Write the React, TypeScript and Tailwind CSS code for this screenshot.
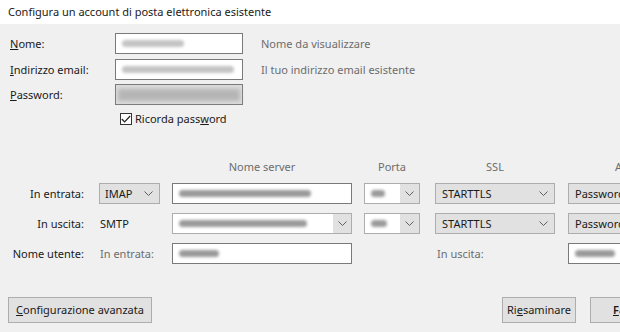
import React from 'react';

const font = "font-['Segoe_UI','Noto_Sans',sans-serif]";

const Chevron = () => (
  <svg width="9" height="5" viewBox="0 0 9 5" className="shrink-0">
    <polyline points="0.5,0.5 4.5,4.5 8.5,0.5" fill="none" stroke="#5f5f5f" strokeWidth="1" />
  </svg>
);

// blurred placeholder for the redacted values
const Smudge = ({ w, dark = false }: { w: number; dark?: boolean }) => (
  <div
    className={dark ? 'h-[7px] rounded-full bg-[#9a9a9a] blur-[1.5px]' : 'h-[7px] rounded-full bg-[#c4c4c4] blur-[1.5px]'}
    style={{ width: w }}
  />
);

const TextBox = ({ w, smudge, dark }: { w: number; smudge: number; dark?: boolean }) => (
  <div className="flex h-[21px] shrink-0 items-center border border-[#7a7a7a] bg-white pl-[6px]" style={{ width: w }}>
    <Smudge w={smudge} dark={dark} />
  </div>
);

const Select = ({ w, label, pl = 6 }: { w: number; label: string; pl?: number }) => (
  <div
    className="flex h-[21px] shrink-0 items-center justify-between whitespace-nowrap border border-[#adadad] bg-[#e1e1e1] pr-[6px] text-[#1a1a1a]"
    style={{ width: w, paddingLeft: pl }}
  >
    <span>{label}</span>
    <Chevron />
  </div>
);

const Combo = ({ w, edit, smudge }: { w: number; edit: number; smudge: number }) => (
  <div className="flex h-[21px] shrink-0 items-stretch border border-[#adadad] bg-[#e1e1e1]" style={{ width: w }}>
    <div className="flex items-center bg-white pl-[6px]" style={{ width: edit }}>
      <Smudge w={smudge} dark />
    </div>
    <div className="flex flex-1 items-center justify-center">
      <Chevron />
    </div>
  </div>
);

const Button = ({ children, w }: { children: React.ReactNode; w: number }) => (
  <div
    className="flex h-[26px] shrink-0 items-center justify-center whitespace-nowrap border border-[#adadad] bg-[#e1e1e1] text-[#1a1a1a]"
    style={{ width: w }}
  >
    {children}
  </div>
);

export default function App() {
  return (
    <div className={`${font} h-[332px] w-[620px] overflow-hidden whitespace-nowrap bg-[#f0f0f0] text-[11px] leading-[16px] text-[#1a1a1a]`}>
      <div className="flex h-[24px] items-center bg-white pl-[8px]">
        Configura un account di posta elettronica esistente
      </div>

      <div className="pl-[10px]">
        <div className="mt-[9px] flex h-[21px] items-center">
          <div className="w-[105px] shrink-0"><u>N</u>ome:</div>
          <TextBox w={128} smudge={62} />
          <div className="ml-[18px] shrink-0 text-[#6d6d6d]">Nome da visualizzare</div>
        </div>
        <div className="mt-[5px] flex h-[21px] items-center">
          <div className="w-[105px] shrink-0"><u>I</u>ndirizzo email:</div>
          <TextBox w={128} smudge={112} />
          <div className="ml-[18px] shrink-0 text-[#6d6d6d]">Il tuo indirizzo email esistente</div>
        </div>
        <div className="mt-[4px] flex h-[21px] items-center">
          <div className="w-[105px] shrink-0"><u>P</u>assword:</div>
          <div className="flex h-[21px] w-[128px] shrink-0 items-center border border-[#7a7a7a] bg-[#dcdcdc] px-[2px]">
            <div className="h-[12px] w-full bg-[#b5b5b5] blur-[2px]" />
          </div>
        </div>
        <div className="mt-[6px] flex h-[16px] items-center pl-[110px]">
          <div className="flex h-[12px] w-[12px] shrink-0 items-center justify-center border border-[#333] bg-white">
            <svg width="10" height="8" viewBox="0 0 10 8">
              <polyline points="0.8,4 3.6,6.8 9.2,1" fill="none" stroke="#222" strokeWidth="1.2" />
            </svg>
          </div>
          <span className="ml-[3px]">Ricorda pass<u>w</u>ord</span>
        </div>
      </div>

      <div className="mt-[32px] flex h-[16px] items-center text-[#6d6d6d]">
        <div className="w-[172px] shrink-0" />
        <div className="w-[180px] shrink-0 text-center">Nome server</div>
        <div className="ml-[12px] w-[56px] shrink-0 text-center">Porta</div>
        <div className="ml-[15px] w-[120px] shrink-0 text-center">SSL</div>
        <div className="ml-[60px] shrink-0">Autenticazione</div>
      </div>

      <div className="mt-[8px] flex h-[21px] items-center">
        <div className="w-[84px] shrink-0 text-right">In entrata:</div>
        <div className="ml-[15px] shrink-0"><Select w={61} label="IMAP" pl={5} /></div>
        <div className="ml-[12px] shrink-0"><TextBox w={180} smudge={132} dark /></div>
        <div className="ml-[12px] shrink-0"><Combo w={56} edit={35} smudge={14} /></div>
        <div className="ml-[15px] shrink-0"><Select w={120} label="STARTTLS" /></div>
        <div className="ml-[13px] shrink-0"><Select w={130} label="Password normale" /></div>
      </div>

      <div className="mt-[9px] flex h-[21px] items-center">
        <div className="w-[84px] shrink-0 text-right">In uscita:</div>
        <div className="ml-[16px] w-[60px] shrink-0">SMTP</div>
        <div className="ml-[12px] shrink-0"><Combo w={180} edit={160} smudge={128} /></div>
        <div className="ml-[12px] shrink-0"><Combo w={56} edit={35} smudge={16} /></div>
        <div className="ml-[15px] shrink-0"><Select w={120} label="STARTTLS" /></div>
        <div className="ml-[13px] shrink-0"><Select w={130} label="Password normale" /></div>
      </div>

      <div className="mt-[9px] flex h-[21px] items-center">
        <div className="w-[84px] shrink-0 text-right">Nome utente:</div>
        <div className="ml-[16px] w-[60px] shrink-0 text-[#6d6d6d]">In entrata:</div>
        <div className="ml-[12px] shrink-0"><TextBox w={180} smudge={40} dark /></div>
        <div className="ml-[85px] w-[131px] shrink-0 text-[#6d6d6d]">In uscita:</div>
        <div className="shrink-0"><TextBox w={130} smudge={40} dark /></div>
      </div>

      <div className="mt-[33px] flex items-center pl-[8px]">
        <Button w={144}><span><u>C</u>onfigurazione avanzata</span></Button>
        <div className="ml-[350px] shrink-0"><Button w={74}><span>Ri<u>e</u>saminare</span></Button></div>
        <div className="ml-[14px] shrink-0"><Button w={74}><span className="font-semibold"><u>F</u>atto</span></Button></div>
      </div>
    </div>
  );
}
